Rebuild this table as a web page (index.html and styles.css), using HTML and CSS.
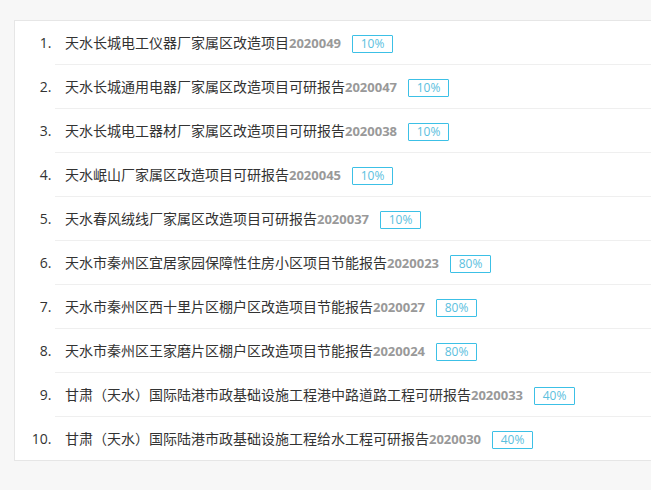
FILE: index.html
```html
<!DOCTYPE html>
<html lang="zh-CN">
<head>
    <meta charset="UTF-8">
    <meta name="viewport" content="width=device-width, initial-scale=1.0">
    <title>项目列表</title>
    <link rel="stylesheet" href="styles.css">
</head>
<body>
    <div class="panel">
        <ol class="project-list">
            <li><span class="name">天水长城电工仪器厂家属区改造项目</span><span class="code">2020049</span><span class="rate">10%</span></li>
            <li><span class="name">天水长城通用电器厂家属区改造项目可研报告</span><span class="code">2020047</span><span class="rate">10%</span></li>
            <li><span class="name">天水长城电工器材厂家属区改造项目可研报告</span><span class="code">2020038</span><span class="rate">10%</span></li>
            <li><span class="name">天水岷山厂家属区改造项目可研报告</span><span class="code">2020045</span><span class="rate">10%</span></li>
            <li><span class="name">天水春风绒线厂家属区改造项目可研报告</span><span class="code">2020037</span><span class="rate">10%</span></li>
            <li><span class="name">天水市秦州区宜居家园保障性住房小区项目节能报告</span><span class="code">2020023</span><span class="rate">80%</span></li>
            <li><span class="name">天水市秦州区西十里片区棚户区改造项目节能报告</span><span class="code">2020027</span><span class="rate">80%</span></li>
            <li><span class="name">天水市秦州区王家磨片区棚户区改造项目节能报告</span><span class="code">2020024</span><span class="rate">80%</span></li>
            <li><span class="name">甘肃（天水）国际陆港市政基础设施工程港中路道路工程可研报告</span><span class="code">2020033</span><span class="rate">40%</span></li>
            <li><span class="name">甘肃（天水）国际陆港市政基础设施工程给水工程可研报告</span><span class="code">2020030</span><span class="rate">40%</span></li>
        </ol>
    </div>
</body>
</html>
```

FILE: styles.css
```css
body {
    margin: 0;
    padding: 20px 0 0 14px;
    background: #f7f7f7;
    font-family: "Open Sans", "Noto Sans CJK SC", sans-serif;
    color: #333;
    height: 490px;
    box-sizing: border-box;
    overflow: hidden;
}
.panel {
    background: #fff;
    border: 1px solid #e6e6e6;
    border-right: none;
}
.project-list {
    margin: 0;
    padding: 0 0 0 40px;
}
.project-list li {
    height: 43px;
    line-height: 43px;
    padding-left: 10px;
    font-size: 14px;
    border-bottom: 1px solid #efefef;
    white-space: nowrap;
}
.project-list li:last-child {
    border-bottom: none;
}
.project-list li::marker {
    font-size: 14px;
    color: #333;
}
.code {
    font-size: 13px;
    font-weight: bold;
    color: #999;
}
.rate {
    display: inline-block;
    margin-left: 11px;
    width: 39px;
    height: 16px;
    line-height: 16px;
    border: 1px solid #3cc0e6;
    border-radius: 1px;
    text-align: center;
    font-size: 12px;
    color: #5bc0de;
    vertical-align: middle;
}
```
